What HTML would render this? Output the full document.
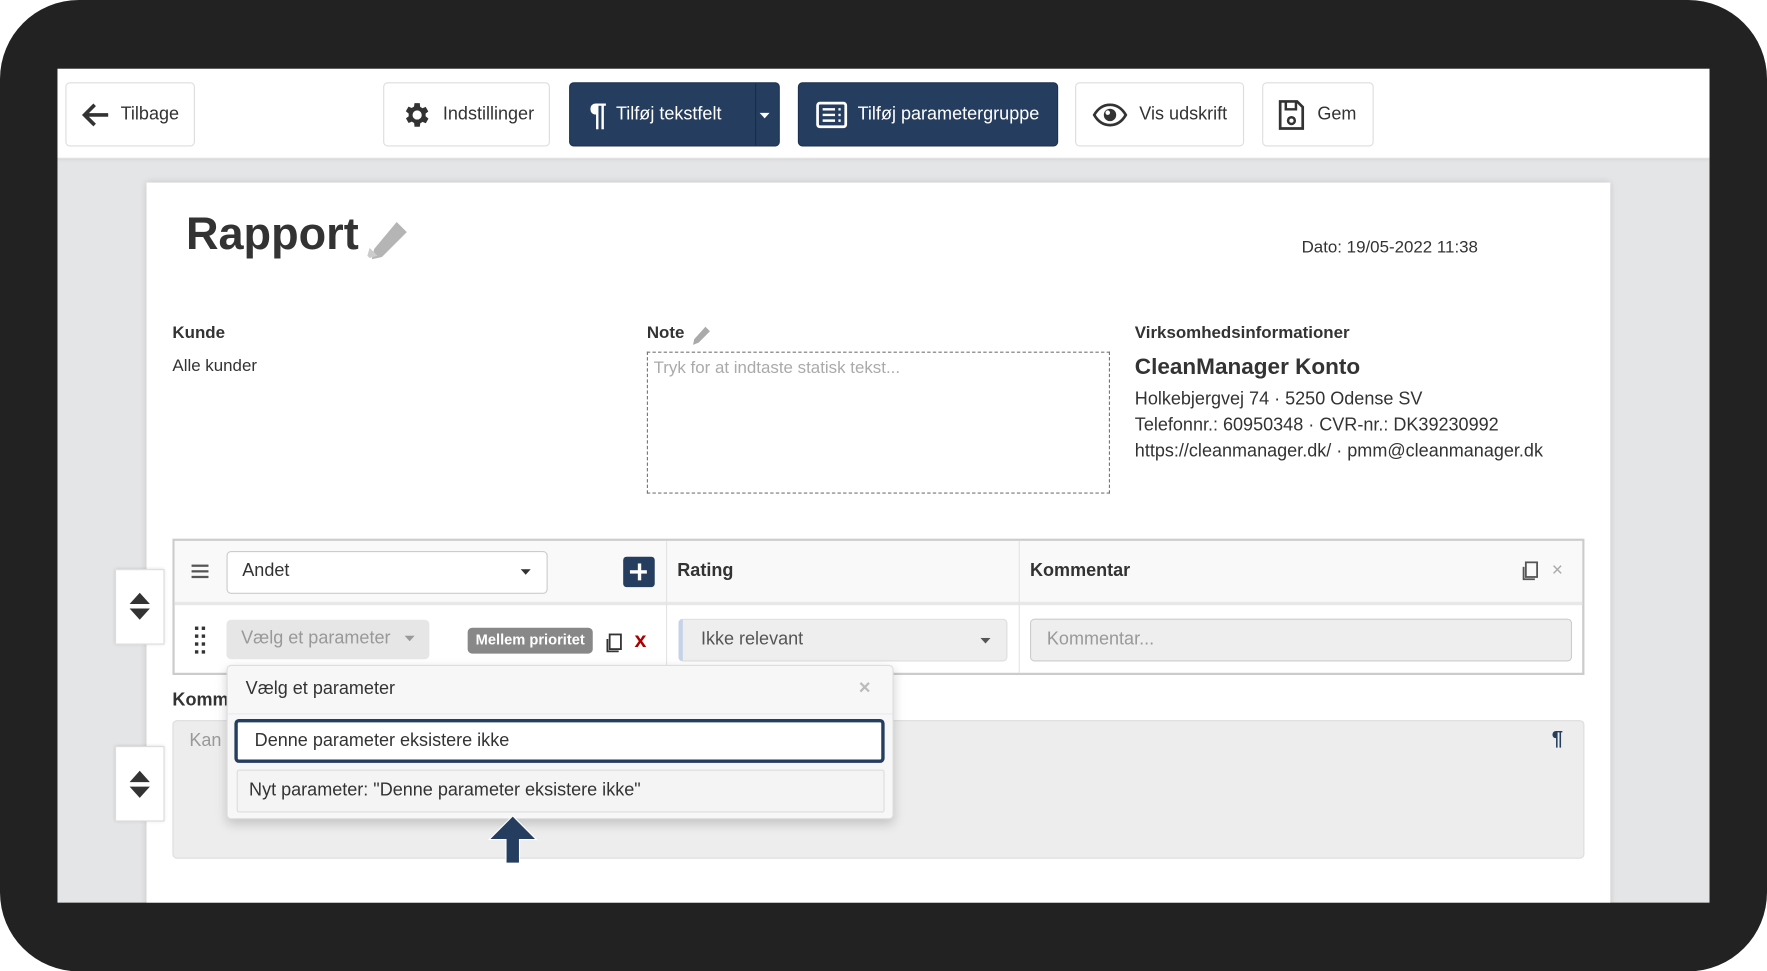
<!DOCTYPE html>
<html><head><meta charset="utf-8"><style>
*{box-sizing:border-box;margin:0;padding:0}
html,body{width:1767px;height:971px;overflow:hidden;background:#fff;font-family:"Liberation Sans",Arial,sans-serif;color:#333}
#s{position:absolute;left:0;top:0;width:1568px;height:862px;transform:scale(1.12691);transform-origin:0 0}
.a{position:absolute}
.frame{left:0;top:0;width:1568px;height:862px;background:#222;border-radius:70px}
.screen{left:51px;top:61px;width:1466px;height:740px;background:#e4e5e7;overflow:hidden}
.tb{left:0;top:0;width:1466px;height:80px;background:#fff;border-bottom:1px solid #ddd;box-shadow:0 1px 3px rgba(0,0,0,.08)}
.btn{position:absolute;top:12px;height:57px;border:1px solid #ddd;border-radius:4px;background:#fff;display:flex;align-items:center;font-size:16px;color:#333}
.btn.d{background:#253e5f;border-color:#1d3250;color:#fff}
.paper{left:79px;top:101px;width:1299px;height:660px;background:#fff;box-shadow:0 0 6px rgba(0,0,0,.15)}
.t15{font-size:15px}
.b{font-weight:bold}
</style></head><body><div id="s">
<div class="a frame"></div>
<div class="a screen">
 <div class="a tb">
  <div class="btn" style="left:7px;width:115px"><svg style="margin-left:13px" width="26" height="22" viewBox="0 0 26 22"><path d="M12 2 3 11l9 9M3 11h21" stroke="#333" stroke-width="3.2" fill="none"/></svg><span style="margin-left:9px">Tilbage</span></div>
  <div class="btn" style="left:289px;width:148px"><svg style="margin-left:14px" width="28" height="28" viewBox="0 0 24 24"><path fill="#333" d="M19.4 13a7.5 7.5 0 0 0 0-2l2.1-1.6-2-3.5-2.5 1a7 7 0 0 0-1.7-1L15 3h-4l-.4 2.7a7 7 0 0 0-1.7 1l-2.5-1-2 3.5L6.6 11a7.5 7.5 0 0 0 0 2l-2.1 1.6 2 3.5 2.5-1a7 7 0 0 0 1.7 1L11 21h4l.4-2.7a7 7 0 0 0 1.7-1l2.5 1 2-3.5zM13 15.5a3.5 3.5 0 1 1 0-7 3.5 3.5 0 0 1 0 7z"/></svg><span style="margin-left:10px">Indstillinger</span></div>
  <div class="btn d" style="left:454px;width:187px"><span style="margin-left:17px;font-size:28px;font-weight:bold">¶</span><span style="margin-left:8px">Tilføj tekstfelt</span><div style="position:absolute;left:164px;top:0;width:1px;height:55px;background:#1a2e48"></div><svg style="position:absolute;left:168px;top:26px" width="9" height="6"><path d="M0 0h9L4.5 5z" fill="#fff"/></svg></div>
  <div class="btn d" style="left:657px;width:231px"><svg style="margin-left:15px" width="28" height="24" viewBox="0 0 28 24"><rect x="1.5" y="1.5" width="25" height="21" rx="2" fill="none" stroke="#fff" stroke-width="2.4"/><path d="M6 7h11M6 12h11M6 17h11M20 7h2M20 12h2M20 17h2" stroke="#fff" stroke-width="2.2"/></svg><span style="margin-left:9px">Tilføj parametergruppe</span></div>
  <div class="btn" style="left:903px;width:150px"><svg style="margin-left:14px" width="32" height="24" viewBox="0 0 32 24"><path d="M2 12C6 5 11 3 16 3s10 2 14 9c-4 7-9 9-14 9S6 19 2 12z" fill="none" stroke="#333" stroke-width="2.4"/><circle cx="16" cy="12" r="5.5" fill="#333"/><circle cx="14" cy="10" r="2" fill="#fff"/></svg><span style="margin-left:10px">Vis udskrift</span></div>
  <div class="btn" style="left:1069px;width:99px"><svg style="margin-left:13px" width="24" height="28" viewBox="0 0 24 28"><path d="M2 2h15l5 5v19H2z" fill="none" stroke="#333" stroke-width="2.4"/><path d="M7 2v7h9V2" fill="none" stroke="#333" stroke-width="2.2"/><circle cx="12" cy="19" r="3" fill="none" stroke="#333" stroke-width="2.2"/></svg><span style="margin-left:11px">Gem</span></div>
 </div>
 <div class="a paper"></div>
</div>
<!-- paper content in display coords -->
<div class="a b" style="left:165px;top:186px;font-size:40px;color:#333">Rapport</div>
<svg class="a" style="left:322px;top:194px" width="42" height="42" viewBox="0 0 42 42"><path d="M30 3l9 9-22 22-9 2 2-9z" fill="#b5b5b5"/><path d="M4 33l2-7 7 7-7 2z" fill="#ccc"/></svg>
<div class="a t15" style="left:1155px;top:211px">Dato: 19/05-2022 11:38</div>
<div class="a t15 b" style="left:153px;top:287px">Kunde</div>
<div class="a t15" style="left:153px;top:316px">Alle kunder</div>
<div class="a t15 b" style="left:574px;top:287px">Note</div>
<svg class="a" style="left:613px;top:289px" width="18" height="18" viewBox="0 0 18 18"><path d="M13 1l4 4-10 10-5 2 1-5z" fill="#aaa"/></svg>
<div class="a" style="left:574px;top:312px;width:411px;height:126px;border:1px dashed #777"></div>
<div class="a t15" style="left:580px;top:318px;color:#aaa">Tryk for at indtaste statisk tekst...</div>
<div class="a t15 b" style="left:1007px;top:287px">Virksomhedsinformationer</div>
<div class="a b" style="left:1007px;top:315px;font-size:20px">CleanManager Konto</div>
<div class="a" style="left:1007px;top:343px;font-size:16px;line-height:23px">Holkebjergvej 74 · 5250 Odense SV<br>Telefonnr.: 60950348 · CVR-nr.: DK39230992<br>https://cleanmanager.dk/ · pmm@cleanmanager.dk</div>
<!-- side widgets -->
<div class="a" style="left:102px;top:505px;width:44px;height:67px;background:#fff;border:1px solid #ddd;box-shadow:0 0 3px rgba(0,0,0,.15)"></div>
<svg class="a" style="left:114px;top:525px" width="20" height="26"><path d="M10 1 19 11H1zM1 15h18l-9 10z" fill="#333"/></svg>
<div class="a" style="left:102px;top:662px;width:44px;height:67px;background:#fff;border:1px solid #ddd;box-shadow:0 0 3px rgba(0,0,0,.15)"></div>
<svg class="a" style="left:114px;top:683px" width="20" height="26"><path d="M10 1 19 11H1zM1 15h18l-9 10z" fill="#333"/></svg>
<!-- table -->
<div class="a" style="left:153px;top:478px;width:1253px;height:121px;border:2px solid #ccc;background:#fff"></div>
<div class="a" style="left:155px;top:480px;width:1249px;height:57px;background:#f9f9f9;border-bottom:3px solid #e8e8e8"></div>
<div class="a" style="left:591px;top:480px;width:1px;height:117px;background:#e4e4e4"></div>
<div class="a" style="left:904px;top:480px;width:1px;height:117px;background:#e4e4e4"></div>
<div class="a" style="left:170px;top:501px;width:15px;height:2px;background:#555;box-shadow:0 5px 0 #555,0 10px 0 #555"></div>
<div class="a" style="left:201px;top:489px;width:285px;height:38px;background:#fff;border:1px solid #ccc;border-radius:4px"></div>
<div class="a" style="left:215px;top:498px;font-size:16px">Andet</div>
<svg class="a" style="left:462px;top:505px" width="9" height="6"><path d="M0 0h9L4.5 5z" fill="#333"/></svg>
<div class="a" style="left:553px;top:494px;width:28px;height:27px;background:#253e5f;border-radius:3px"></div>
<div class="a" style="left:567px;top:500px;width:3px;height:15px;background:#fff;margin-left:-1px"></div>
<div class="a" style="left:559px;top:506px;width:15px;height:3px;background:#fff"></div>
<div class="a t15 b" style="left:601px;top:498px;font-size:16px">Rating</div>
<div class="a t15 b" style="left:914px;top:498px;font-size:16px">Kommentar</div>
<svg class="a" style="left:1350px;top:498px" width="16" height="18"><rect x="4" y="1" width="10" height="13" fill="none" stroke="#555" stroke-width="1.6"/><path d="M2 5v11h10" fill="none" stroke="#555" stroke-width="1.6"/></svg>
<div class="a" style="left:1377px;top:496px;color:#aaa;font-size:17px">×</div>
<!-- row 2 -->
<div class="a" style="left:173px;top:556px;width:3px;height:3px;background:#333;box-shadow:6px 0 #333,0 7px #333,6px 7px #333,0 14px #333,6px 14px #333,0 21px #333,6px 21px #333"></div>
<div class="a" style="left:201px;top:550px;width:180px;height:35px;background:#e6e6e6;border-radius:4px"></div>
<div class="a" style="left:214px;top:558px;font-size:16px;color:#999">Vælg et parameter</div>
<svg class="a" style="left:359px;top:564px" width="9" height="6"><path d="M0 0h9L4.5 5z" fill="#999"/></svg>
<div class="a b" style="left:415px;top:557px;width:111px;height:23px;background:#888;border-radius:4px;color:#fff;font-size:13px;line-height:21px;text-align:center">Mellem prioritet</div>
<svg class="a" style="left:537px;top:562px" width="16" height="18"><rect x="4" y="1" width="10" height="13" fill="none" stroke="#333" stroke-width="1.6"/><path d="M2 5v11h10" fill="none" stroke="#333" stroke-width="1.6"/></svg>
<div class="a b" style="left:563px;top:558px;color:#a00;font-size:19px">x</div>
<div class="a" style="left:602px;top:549px;width:292px;height:38px;background:#eee;border:1px solid #ddd;border-left:4px solid #c5d3e6;border-radius:4px"></div>
<div class="a" style="left:622px;top:559px;font-size:16px;color:#555">Ikke relevant</div>
<svg class="a" style="left:870px;top:566px" width="9" height="6"><path d="M0 0h9L4.5 5z" fill="#555"/></svg>
<div class="a" style="left:914px;top:549px;width:481px;height:38px;background:#eee;border:1px solid #ccc;border-radius:4px"></div>
<div class="a" style="left:929px;top:559px;font-size:16px;color:#999">Kommentar...</div>
<!-- komm -->
<div class="a t15 b" style="left:153px;top:613px;font-size:16px">Komm</div>
<div class="a" style="left:153px;top:639px;width:1253px;height:123px;background:#ededed;border:1px solid #ddd;border-radius:4px"></div>
<div class="a" style="left:168px;top:649px;font-size:16px;color:#999">Kan</div>
<div class="a b" style="left:1377px;top:645px;font-size:18px;color:#253e5f">¶</div>
<!-- dropdown -->
<div class="a" style="left:201px;top:590px;width:592px;height:137px;background:#f7f7f7;border:1px solid #ddd;border-radius:4px;box-shadow:0 4px 10px rgba(0,0,0,.18)"></div>
<div class="a" style="left:218px;top:603px;font-size:16px">Vælg et parameter</div>
<div class="a b" style="left:762px;top:600px;color:#bbb;font-size:18px">×</div>
<div class="a" style="left:202px;top:633px;width:590px;height:1px;background:#e6ecf2"></div>
<div class="a" style="left:208px;top:638px;width:577px;height:39px;background:#fff;border:3px solid #253e5f;border-radius:4px"></div>
<div class="a" style="left:226px;top:649px;font-size:16px">Denne parameter eksistere ikke</div>
<div class="a" style="left:210px;top:683px;width:575px;height:38px;background:#f4f4f4;border:1px solid #ddd;border-radius:2px"></div>
<div class="a" style="left:221px;top:693px;font-size:16px">Nyt parameter: "Denne parameter eksistere ikke"</div>
<svg class="a" style="left:432px;top:722px" width="46" height="46"><path d="M23 2 44 23H29v21h-12V23H2z" fill="#253e5f" stroke="#fff" stroke-width="1"/></svg>
</div></body></html>
